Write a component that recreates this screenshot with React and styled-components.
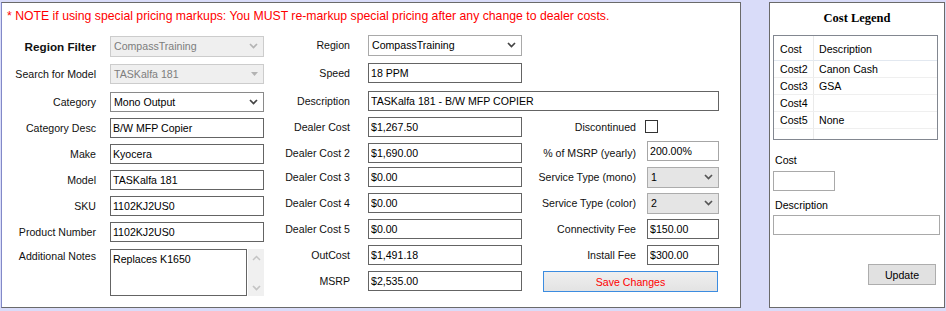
import React from 'react';
import styled, { createGlobalStyle } from 'styled-components';

const FS = '10.6px';

const Global = createGlobalStyle`
  html, body { margin: 0; padding: 0; background: #d9dcf9; }
  body { font-family: "Liberation Sans", Arial, sans-serif; font-size: ${FS}; color: #000; }
  * { box-sizing: border-box; }
`;

const Page = styled.div`
  display: flex;
  align-items: flex-start;
  gap: 28px;
  padding: 2px 0 0 1px;
  width: 946px;
  height: 311px;
  background: #d9dcf9;
`;

const Panel = styled.section`
  width: ${p => p.$w}px;
  height: 306px;
  background: #fff;
  border: 1px solid #6a6a6a;
  border-left-color: ${p => p.$leftColor || '#6a6a6a'};
  display: flex;
  flex-direction: column;
  padding: ${p => p.$pad};
`;

const Note = styled.div`
  color: #ff0000;
  font-size: 12.25px;
  line-height: 16px;
  white-space: nowrap;
`;

const FormArea = styled.div`
  display: flex;
  align-items: flex-start;
  margin-top: 11px;
`;

const LeftGrid = styled.div`
  display: grid;
  grid-template-columns: 103px 154px;
  grid-template-rows: 28px 28px 26px 26px 26px 26px 26px 27px 47px;
  margin-top: 1px;
`;

const RightGrid = styled.div`
  display: grid;
  grid-template-columns: 104px 154px 125px 72px;
  grid-template-rows: 28px 28px 26px 26px 24px 26px 26px 26px 26px 22px;
`;

const Label = styled.div`
  grid-column: ${p => p.$col || 'auto'};
  align-self: start;
  height: ${p => (p.$top ? 'auto' : '20px')};
  line-height: ${p => (p.$top ? '13px' : p.$bold ? '21px' : '20px')};
  padding-top: ${p => (p.$top ? '1px' : '0')};
  padding-right: ${p => p.$pr}px;
  text-align: right;
  white-space: nowrap;
  font-weight: ${p => (p.$bold ? 700 : 400)};
  font-size: ${p => (p.$bold ? '11.7px' : FS)};
  color: #111;
`;

const TextBox = styled.input`
  grid-column: ${p => (p.$span ? `span ${p.$span}` : 'auto')};
  align-self: start;
  width: ${p => (p.$w ? `${p.$w}px` : '100%')};
  height: 20px;
  margin: ${p => (p.$lift ? '-2px 0 0 0' : '0')};
  padding: 0 2px 1px;
  border: 1px solid ${p => (p.$light ? '#a6a6a6' : '#646464')};
  border-radius: 0;
  background: #fff;
  font-family: "Liberation Sans", Arial, sans-serif;
  font-size: ${FS};
  color: #000;
  outline: none;
`;

const selectSkins = {
  disabled: { bg: '#efefef', border: '#cccccc', color: '#7d7d7d', arrow: '#b3b3b3' },
  white: { bg: '#ffffff', border: '#8a8a8a', color: '#000', arrow: '#444' },
  light: { bg: '#ffffff', border: '#a9a9a9', color: '#000', arrow: '#444' },
  gray: { bg: '#e5e5e5', border: '#acacac', color: '#000', arrow: '#555' },
};

const Select = styled.div`
  align-self: start;
  display: flex;
  align-items: center;
  justify-content: space-between;
  width: 100%;
  height: ${p => p.$h || 21}px;
  padding: 0 5px 1px 3px;
  background: ${p => selectSkins[p.$skin].bg};
  border: 1px solid ${p => selectSkins[p.$skin].border};
  color: ${p => selectSkins[p.$skin].color};
  white-space: nowrap;
  & svg { color: ${p => selectSkins[p.$skin].arrow}; flex: none; }
`;

const Chevron = () => (
  <svg width="9" height="6" viewBox="0 0 9 6">
    <path d="M1 1 L4.5 4.5 L8 1" fill="none" stroke="currentColor" strokeWidth="1.7" />
  </svg>
);

const ChevronUp = () => (
  <svg width="9" height="6" viewBox="0 0 9 6">
    <path d="M1 5 L4.5 1.5 L8 5" fill="none" stroke="currentColor" strokeWidth="1.5" />
  </svg>
);

const Triangle = () => (
  <svg width="7" height="4" viewBox="0 0 7 4">
    <path d="M0 0 H7 L3.5 4 Z" fill="currentColor" />
  </svg>
);

const NotesWrap = styled.div`
  align-self: start;
  display: flex;
  gap: 1px;
  height: 47px;
`;

const NotesText = styled.div`
  flex: 0 0 137px;
  border: 1px solid #646464;
  padding: 1px 2px;
  line-height: 16px;
`;

const ScrollTrack = styled.div`
  flex: 0 0 16px;
  background: #f0f0f0;
  display: flex;
  flex-direction: column;
  justify-content: space-between;
  align-items: center;
  padding: 6px 0 5px;
  color: #c4c4c4;
`;

const CheckBox = styled.span`
  align-self: start;
  width: 13px;
  height: 13px;
  margin: 3px 0 0 -2px;
  border: 1px solid #333;
  background: #fff;
`;

const SaveButton = styled.button`
  grid-column: 3 / span 2;
  align-self: start;
  width: 175px;
  height: 21px;
  margin-left: 21px;
  padding: 0;
  border: 1px solid #3c8ce0;
  background: linear-gradient(#efefef, #e3e3e3);
  color: #ff0000;
  font-family: "Liberation Sans", Arial, sans-serif;
  font-size: ${FS};
`;

/* Side panel */
const Title = styled.div`
  height: 30px;
  margin-bottom: 2px;
  display: flex;
  align-items: center;
  justify-content: center;
  font-family: "Liberation Serif", "Times New Roman", serif;
  font-weight: 700;
  font-size: 12.5px;
`;

const Table = styled.div`
  width: 165px;
  height: 105px;
  border: 1px solid #828790;
  overflow: hidden;
  background: #fff;
`;

const TRow = styled.div`
  display: grid;
  grid-template-columns: 40px 1fr;
  height: ${p => (p.$head ? 25 : 17)}px;
  border-bottom: 1px solid ${p => (p.$head ? '#e2e8f0' : '#efefef')};
  line-height: ${p => (p.$head ? 26 : 16)}px;
`;

const TCell = styled.div`
  padding-left: ${p => (p.$first ? 6 : 5)}px;
  border-right: ${p => (p.$first ? '1px solid #eaeaea' : 'none')};
  white-space: nowrap;
`;

const FieldLabel = styled.div`
  margin-top: ${p => p.$mt}px;
  padding-left: 2px;
  line-height: 13px;
`;

const SideBox = styled.input`
  width: ${p => p.$w}px;
  height: 20px;
  margin-top: ${p => p.$mt}px;
  border: 1px solid #a9a9a9;
  border-radius: 0;
  background: #fff;
  padding: 0 2px;
  font-family: "Liberation Sans", Arial, sans-serif;
  font-size: ${FS};
  outline: none;
`;

const UpdateButton = styled.button`
  align-self: flex-end;
  width: 68px;
  height: 21px;
  margin: 29px 5px 0 0;
  padding: 0;
  border: 1px solid #adadad;
  background: #e1e1e1;
  color: #000;
  font-family: "Liberation Sans", Arial, sans-serif;
  font-size: ${FS};
`;

const legend = [
  ['Cost2', 'Canon Cash'],
  ['Cost3', 'GSA'],
  ['Cost4', ''],
  ['Cost5', 'None'],
  ['', ''],
];

const leftFields = [
  ['Category Desc', 'B/W MFP Copier'],
  ['Make', 'Kyocera'],
  ['Model', 'TASKalfa 181'],
  ['SKU', '1102KJ2US0'],
  ['Product Number', '1102KJ2US0'],
];

export default function App() {
  return (
    <>
      <Global />
      <Page>
        <Panel $w={740} $pad="5px 0 0 5px" $leftColor="#8289c8">
          <Note>* NOTE if using special pricing markups: You MUST re-markup special pricing after any change to dealer costs.</Note>
          <FormArea>
            <LeftGrid>
              <Label $pr={14} $bold>Region Filter</Label>
              <Select $skin="disabled"><span>CompassTraining</span><Chevron /></Select>
              <Label $pr={14}>Search for Model</Label>
              <Select $skin="disabled" $h={20}><span>TASKalfa 181</span><Triangle /></Select>
              <Label $pr={14}>Category</Label>
              <Select $skin="white" $h={20}><span>Mono Output</span><Chevron /></Select>
              {leftFields.map(([l, v]) => (
                <React.Fragment key={l}>
                  <Label $pr={14}>{l}</Label>
                  <TextBox readOnly value={v} />
                </React.Fragment>
              ))}
              <Label $pr={14} $top>Additional Notes</Label>
              <NotesWrap>
                <NotesText>Replaces K1650</NotesText>
                <ScrollTrack><ChevronUp /><Chevron /></ScrollTrack>
              </NotesWrap>
            </LeftGrid>

            <RightGrid>
              <Label $col={1} $pr={18}>Region</Label>
              <Select $skin="light"><span>CompassTraining</span><Chevron /></Select>

              <Label $col={1} $pr={18}>Speed</Label>
              <TextBox readOnly value="18 PPM" />

              <Label $col={1} $pr={18}>Description</Label>
              <TextBox readOnly $span={3} value="TASKalfa 181 - B/W MFP COPIER" />

              <Label $col={1} $pr={18}>Dealer Cost</Label>
              <TextBox readOnly value="$1,267.50" />
              <Label $pr={11}>Discontinued</Label>
              <CheckBox />

              <Label $col={1} $pr={18}>Dealer Cost 2</Label>
              <TextBox readOnly value="$1,690.00" />
              <Label $pr={11}>% of MSRP (yearly)</Label>
              <TextBox readOnly $light $lift value="200.00%" />

              <Label $col={1} $pr={18}>Dealer Cost 3</Label>
              <TextBox readOnly value="$0.00" />
              <Label $pr={11}>Service Type (mono)</Label>
              <Select $skin="gray"><span>1</span><Chevron /></Select>

              <Label $col={1} $pr={18}>Dealer Cost 4</Label>
              <TextBox readOnly value="$0.00" />
              <Label $pr={11}>Service Type (color)</Label>
              <Select $skin="gray"><span>2</span><Chevron /></Select>

              <Label $col={1} $pr={18}>Dealer Cost 5</Label>
              <TextBox readOnly value="$0.00" />
              <Label $pr={11}>Connectivity Fee</Label>
              <TextBox readOnly value="$150.00" />

              <Label $col={1} $pr={18}>OutCost</Label>
              <TextBox readOnly value="$1,491.18" />
              <Label $pr={11}>Install Fee</Label>
              <TextBox readOnly value="$300.00" />

              <Label $col={1} $pr={18}>MSRP</Label>
              <TextBox readOnly value="$2,535.00" />
              <SaveButton>Save Changes</SaveButton>
            </RightGrid>
          </FormArea>
        </Panel>

        <Panel $w={176} $pad="0 3px">
          <Title>Cost Legend</Title>
          <Table>
            <TRow $head>
              <TCell $first>Cost</TCell>
              <TCell>Description</TCell>
            </TRow>
            {legend.map(([c, d], i) => (
              <TRow key={i}>
                <TCell $first>{c}</TCell>
                <TCell>{d}</TCell>
              </TRow>
            ))}
          </Table>
          <FieldLabel $mt={14}>Cost</FieldLabel>
          <SideBox $w={62} $mt={4} readOnly value="" />
          <FieldLabel $mt={8}>Description</FieldLabel>
          <SideBox $w={167} $mt={3} readOnly value="" />
          <UpdateButton>Update</UpdateButton>
        </Panel>
      </Page>
    </>
  );
}
